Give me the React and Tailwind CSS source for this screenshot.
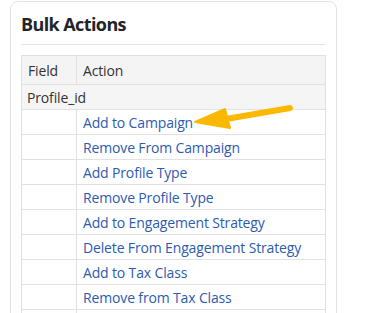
const actions = [
  'Add to Campaign',
  'Remove From Campaign',
  'Add Profile Type',
  'Remove Profile Type',
  'Add to Engagement Strategy',
  'Delete From Engagement Strategy',
  'Add to Tax Class',
  'Remove from Tax Class',
];

function Arrow() {
  return (
    <svg className="absolute left-[190px] top-[100px]" width="110" height="34" viewBox="0 0 110 34">
      <line x1="100" y1="8" x2="36" y2="19" stroke="#fbb800" strokeWidth="6" strokeLinecap="round" />
      <polygon points="5,22 35,9 40,28" fill="#fbb800" stroke="#fbb800" strokeWidth="2" strokeLinejoin="round" />
    </svg>
  );
}

export default function App() {
  return (
    <div className="relative h-[313px] w-[365px] overflow-hidden bg-white pl-[10px] pt-[1px] font-['Open_Sans',sans-serif]">
      <div className="w-[327px] rounded-lg border border-[#dfe3e8] px-[10px] pb-4">
        <h2 className="border-b border-[#dfe3e8] pb-[8px] pt-[10px] text-[18px] font-bold leading-6 tracking-[-0.6px] text-[#212529]">
          Bulk Actions
        </h2>
        <table className="mt-[10px] w-full border-collapse text-[14px] tracking-[-0.15px] text-[#333]">
          <thead>
            <tr className="h-[29px] bg-[#f4f4f4]">
              <th className="w-[55px] border border-[#e1e1e1] px-[6px] text-left font-normal">Field</th>
              <th className="border border-[#e1e1e1] px-[6px] text-left font-normal">Action</th>
            </tr>
          </thead>
          <tbody>
            <tr className="h-[25px] bg-[#f5f5f5]">
              <td colSpan={2} className="border border-[#e1e1e1] px-[5px]">Profile_id</td>
            </tr>
            {actions.map((a) => (
              <tr key={a} className="h-[25px]">
                <td className="border border-[#e1e1e1]"></td>
                <td className="border border-[#e1e1e1] px-[6px] text-[#2d5bb0]">
                  <a href="#">{a}</a>
                </td>
              </tr>
            ))}
            <tr className="h-[25px]">
              <td className="border border-[#e1e1e1]"></td>
              <td className="border border-[#e1e1e1]"></td>
            </tr>
          </tbody>
        </table>
      </div>
      <Arrow />
    </div>
  );
}
